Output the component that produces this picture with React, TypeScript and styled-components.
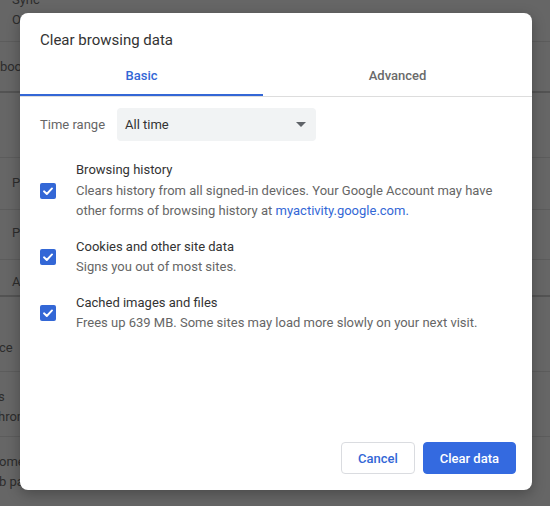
import React from "react";
import styled, { createGlobalStyle } from "styled-components";

const Global = createGlobalStyle`
  html, body { margin: 0; padding: 0; }
  body {
    background: #666666;
    font-family: Roboto, "Liberation Sans", Arial, sans-serif;
    overflow: hidden;
  }
`;

const Screen = styled.div`
  position: relative;
  width: 550px;
  height: 506px;
  overflow: hidden;
  background: #666666;
`;

const BgPage = styled.div`
  display: flex;
  flex-direction: column;
  margin-top: -10px;
`;

const BgRow = styled.div<{ $h: number; $pt: number; $strong?: boolean }>`
  height: ${(p) => p.$h}px;
  box-sizing: border-box;
  padding-top: ${(p) => p.$pt}px;
  border-bottom: ${(p) => (p.$strong ? "2px solid #535353" : "1px solid #5c5c5c")};
  display: flex;
  flex-direction: column;
`;

const BgLine = styled.div<{ $indent: number }>`
  font-size: 13px;
  line-height: 20px;
  color: #2c2c2c;
  white-space: nowrap;
  margin-left: ${(p) => p.$indent}px;
`;

const Dialog = styled.div`
  position: absolute;
  left: 20px;
  top: 13px;
  width: 512px;
  height: 477px;
  background: #ffffff;
  border-radius: 8px;
  box-shadow: 0 4px 14px rgba(0, 0, 0, 0.28);
  display: flex;
  flex-direction: column;
  overflow: hidden;
`;

const Title = styled.div`
  padding: 17px 20px 0;
  font-size: 15px;
  line-height: 20px;
  color: #333333;
`;

const TabBar = styled.div`
  margin-top: 5px;
  display: flex;
  border-bottom: 1px solid #dddddd;
`;

const Tab = styled.div<{ $active?: boolean; $width?: number }>`
  ${(p) => (p.$width ? `width: ${p.$width}px;` : "flex: 1;")}
  height: 41px;
  box-sizing: border-box;
  padding-top: 2px;
  display: flex;
  align-items: center;
  justify-content: center;
  font-size: 13px;
  font-weight: 500;
  color: ${(p) => (p.$active ? "#3367d6" : "#6a6a6a")};
  border-bottom: 2px solid ${(p) => (p.$active ? "#3367d6" : "transparent")};
`;

const Body = styled.div`
  padding: 11px 20px 0;
  display: flex;
  flex-direction: column;
`;

const TimeRow = styled.div`
  display: flex;
  align-items: center;
`;

const TimeLabel = styled.div`
  width: 77px;
  font-size: 13px;
  color: #666666;
`;

const Select = styled.div`
  width: 199px;
  height: 33px;
  box-sizing: border-box;
  background: #f1f3f4;
  border-radius: 4px;
  padding: 0 10px 0 8px;
  display: flex;
  align-items: center;
  justify-content: space-between;
  font-size: 13px;
  color: #333333;
`;

const Options = styled.div`
  margin-top: 19px;
  display: flex;
  flex-direction: column;
  gap: 15px;
`;

const OptionRow = styled.div`
  display: flex;
  align-items: center;
`;

const CheckBox = styled.div`
  width: 16px;
  height: 16px;
  flex: none;
  border-radius: 2px;
  background: #3367d6;
  margin-right: 20px;
  display: flex;
  align-items: center;
  justify-content: center;
`;

const OptionText = styled.div`
  font-size: 13px;
  line-height: 20.5px;
  display: flex;
  flex-direction: column;
`;

const OptionTitle = styled.div`
  color: #333333;
`;

const OptionDesc = styled.div`
  color: #666666;
`;

const Link = styled.span`
  color: #3367d6;
`;

const Footer = styled.div`
  margin-top: auto;
  padding: 0 16px 16px;
  display: flex;
  justify-content: flex-end;
  gap: 8px;
`;

const Button = styled.button<{ $primary?: boolean }>`
  height: 32px;
  box-sizing: border-box;
  padding: 0 16px;
  border-radius: 4px;
  font-family: Roboto, "Liberation Sans", Arial, sans-serif;
  font-size: 13px;
  font-weight: 500;
  cursor: pointer;
  background: ${(p) => (p.$primary ? "#346ae0" : "#ffffff")};
  color: ${(p) => (p.$primary ? "#ffffff" : "#3367d6")};
  border: ${(p) => (p.$primary ? "1px solid #346ae0" : "1px solid #dadce0")};
`;

const Check = () => (
  <svg width="12" height="12" viewBox="0 0 12 12">
    <path d="M2 6.3 L4.8 9 L10 3.4" fill="none" stroke="#ffffff" strokeWidth="1.9" strokeLinecap="round" strokeLinejoin="round" />
  </svg>
);

const Arrow = () => (
  <svg width="10" height="5" viewBox="0 0 10 5">
    <polygon points="0,0 10,0 5,5" fill="#5f6368" />
  </svg>
);

const bgRows: { h: number; pt: number; strong?: boolean; lines: { t: string; i: number }[] }[] = [
  { h: 52, pt: 0, lines: [{ t: "Sync", i: 12 }, { t: "On", i: 12 }] },
  { h: 51, pt: 15, strong: true, lines: [{ t: "ebook", i: -7 }] },
  { h: 65, pt: 0, lines: [] },
  { h: 52, pt: 15, lines: [{ t: "Passwords", i: 12 }] },
  { h: 50, pt: 13, lines: [{ t: "Payment", i: 12 }] },
  { h: 37, pt: 12, strong: true, lines: [{ t: "Addresses", i: 12 }] },
  { h: 75, pt: 41, lines: [{ t: "ce", i: -1 }] },
  { h: 65, pt: 15, lines: [{ t: "es", i: -9 }, { t: "hronize", i: -2 }] },
  { h: 80, pt: 15, lines: [{ t: "ome", i: -1 }, { t: "b pages", i: -1 }] },
];

export default function App() {
  return (
    <Screen>
      <Global />
      <BgPage>
        {bgRows.map((r, idx) => (
          <BgRow key={idx} $h={r.h} $pt={r.pt} $strong={r.strong}>
            {r.lines.map((l, j) => (
              <BgLine key={j} $indent={l.i}>
                {l.t}
              </BgLine>
            ))}
          </BgRow>
        ))}
      </BgPage>
      <Dialog>
        <Title>Clear browsing data</Title>
        <TabBar>
          <Tab $active $width={243}>Basic</Tab>
          <Tab>Advanced</Tab>
        </TabBar>
        <Body>
          <TimeRow>
            <TimeLabel>Time range</TimeLabel>
            <Select>
              <span>All time</span>
              <Arrow />
            </Select>
          </TimeRow>
          <Options>
            <OptionRow>
              <CheckBox>
                <Check />
              </CheckBox>
              <OptionText>
                <OptionTitle>Browsing history</OptionTitle>
                <OptionDesc>
                  Clears history from all signed-in devices. Your Google Account may have other forms of browsing history at{" "}
                  <Link>myactivity.google.com.</Link>
                </OptionDesc>
              </OptionText>
            </OptionRow>
            <OptionRow>
              <CheckBox>
                <Check />
              </CheckBox>
              <OptionText>
                <OptionTitle>Cookies and other site data</OptionTitle>
                <OptionDesc>Signs you out of most sites.</OptionDesc>
              </OptionText>
            </OptionRow>
            <OptionRow>
              <CheckBox>
                <Check />
              </CheckBox>
              <OptionText>
                <OptionTitle>Cached images and files</OptionTitle>
                <OptionDesc>Frees up 639 MB. Some sites may load more slowly on your next visit.</OptionDesc>
              </OptionText>
            </OptionRow>
          </Options>
        </Body>
        <Footer>
          <Button>Cancel</Button>
          <Button $primary>Clear data</Button>
        </Footer>
      </Dialog>
    </Screen>
  );
}
